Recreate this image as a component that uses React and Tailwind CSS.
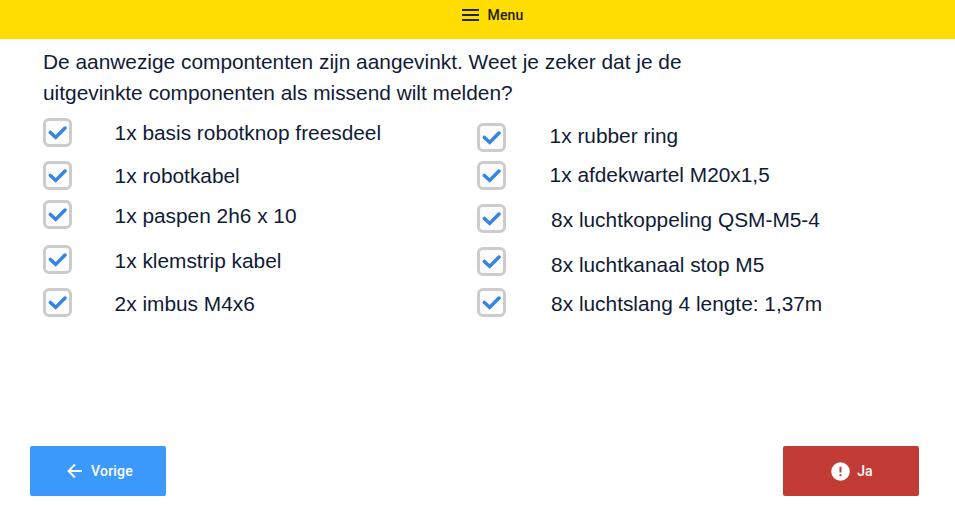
const leftItems = [
  { label: '1x basis robotknop freesdeel', row: 'h-[43px]', text: 'mt-0' },
  { label: '1x robotkabel', row: 'h-[39px]', text: 'mt-0' },
  { label: '1x paspen 2h6 x 10', row: 'h-[45px]', text: 'mt-px' },
  { label: '1x klemstrip kabel', row: 'h-[43px]', text: 'mt-px' },
  { label: '2x imbus M4x6', row: 'h-[29px]', text: 'mt-px' },
];

const rightItems = [
  { label: '1x rubber ring', row: 'h-[38px]', text: '-mt-0.5 ml-px' },
  { label: '1x afdekwartel M20x1,5', row: 'h-[43px]', text: '-mt-px ml-px' },
  { label: '8x luchtkoppeling QSM-M5-4', row: 'h-[43px]', text: 'mt-px ml-[2.5px]' },
  { label: '8x luchtkanaal stop M5', row: 'h-[41px]', text: 'mt-[3px] ml-[2.5px]' },
  { label: '8x luchtslang 4 lengte: 1,37m', row: 'h-[29px]', text: 'mt-px ml-[2.5px]' },
];

function Checkbox() {
  return (
    <span className="flex h-[29px] w-[29px] shrink-0 items-center justify-center rounded-[6px] border-3 border-[#cccccc] bg-[#fcfcfc]">
      <svg width="20" height="16" viewBox="0 0 20 16" fill="none" className="shrink-0">
        <path d="M2.4 7.4 7.7 12.4 17 3" stroke="#3484e8" strokeWidth="3.5" strokeLinecap="round" />
      </svg>
    </span>
  );
}

function Item({ item }) {
  return (
    <li className={`flex items-start ${item.row}`}>
      <Checkbox />
      <span className={`pl-[42.6px] text-[20.85px] leading-[29px] whitespace-nowrap ${item.text}`}>{item.label}</span>
    </li>
  );
}

export default function App() {
  return (
    <div className="flex h-[505px] w-[955px] flex-col overflow-hidden bg-white font-['Liberation_Sans',Arial,sans-serif] text-[#101b36]">
      <header className="flex h-[39px] shrink-0 justify-center bg-[#ffdd00] pl-[31px]">
        <button className="flex h-[30px] items-center gap-2 font-[Roboto,sans-serif] text-[14px] font-medium tracking-[0.2px] text-[#1d1a05]">
          <svg width="17" height="12" viewBox="0 0 17 12" className="shrink-0">
            <path d="M0 1h17M0 6h17M0 11h17" stroke="#29250a" strokeWidth="2" />
          </svg>
          Menu
        </button>
      </header>
      <main className="flex-1 pl-[43px]">
        <h1 className="h-[79px] pt-[7px] text-[20.86px] leading-[31px] whitespace-nowrap">
          <span className="block">De aanwezige compontenten zijn aangevinkt. Weet je zeker dat je de</span>
          <span className="block">uitgevinkte componenten als missend wilt melden?</span>
        </h1>
        <div className="flex">
          <ul className="w-[434px]">
            {leftItems.map((item) => <Item key={item.label} item={item} />)}
          </ul>
          <ul className="pt-[5px]">
            {rightItems.map((item) => <Item key={item.label} item={item} />)}
          </ul>
        </div>
      </main>
      <footer className="flex shrink-0 justify-between pr-[36px] pb-[9px] pl-[30px] font-[Roboto,sans-serif] text-[14px] font-medium tracking-[0.2px] text-white">
        <button className="flex h-[50px] w-[136px] items-center justify-center gap-2 rounded-[2px] bg-[#3b99fc] pl-1">
          <svg width="16" height="16" viewBox="0 0 16 16" fill="none" className="shrink-0">
            <path d="M15 8H2M8 1.5 1.5 8 8 14.5" stroke="white" strokeWidth="1.9" />
          </svg>
          Vorige
        </button>
        <button className="flex h-[50px] w-[136px] items-center justify-center gap-[7px] rounded-[2px] bg-[#c23b35] pl-0.5">
          <svg width="19" height="19" viewBox="0 0 19 19" className="shrink-0">
            <circle cx="9.5" cy="9.5" r="9.3" fill="white" />
            <path d="M9.5 4.7v5.8M9.5 12.2v2" stroke="#c23b35" strokeWidth="2" />
          </svg>
          Ja
        </button>
      </footer>
    </div>
  );
}
